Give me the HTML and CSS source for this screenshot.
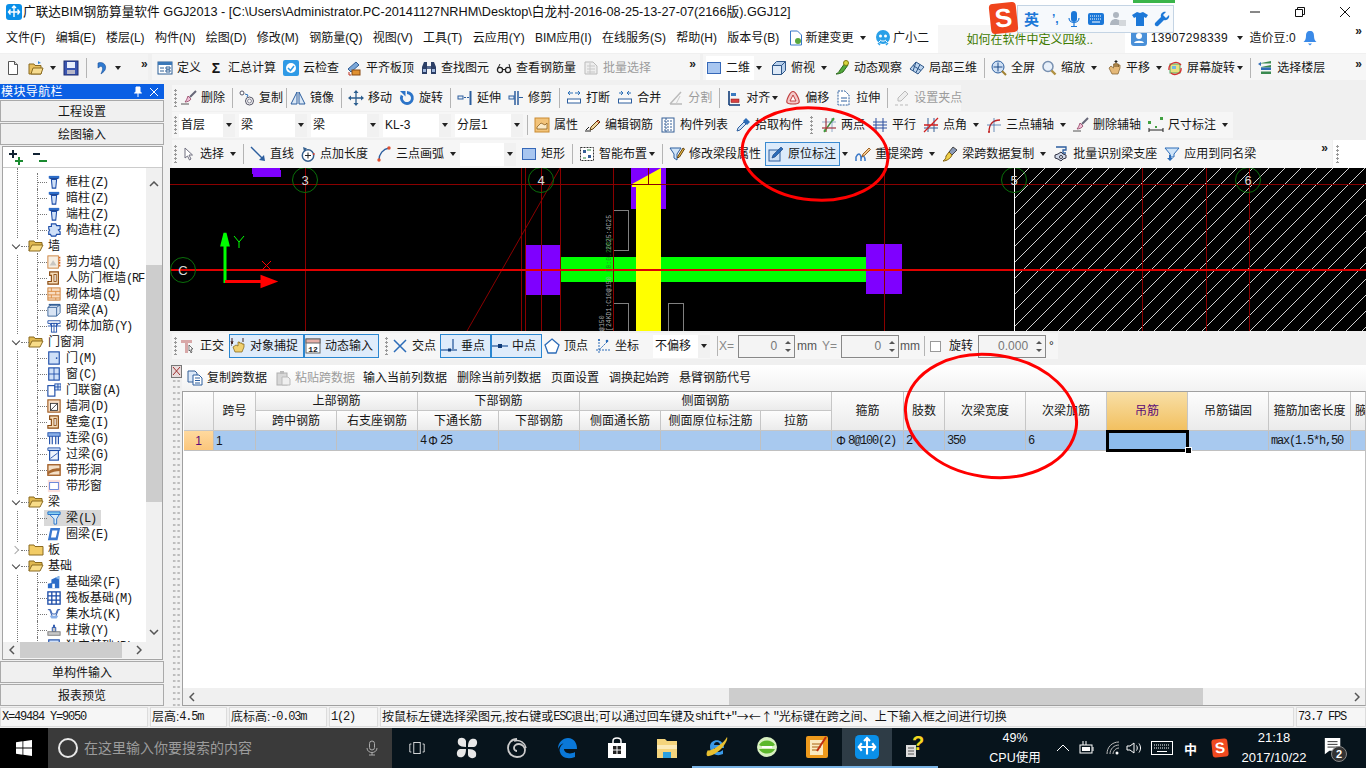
FILE: index.html
```html
<!DOCTYPE html>
<html lang="zh-CN">
<head>
<meta charset="utf-8">
<title>广联达BIM钢筋算量软件 GGJ2013</title>
<link rel="stylesheet" href="styles.css">
</head>
<body>
<svg class="defs" aria-hidden="true">
<symbol id="logo" viewBox="0 0 16 16"><rect x="0" y="0" width="16" height="16" rx="3" fill="#0a8fe8"/><path d="M8 3v10M2.500 8h11M4.500 5.500L2.500 8l2 2.500M11.500 5.500l2 2.500-2 2.500M6 4l2-2 2 2" stroke="#fff" stroke-width="1.400" fill="none"/></symbol>
<symbol id="new" viewBox="0 0 16 16"><path d="M3.500 1.500h6l3 3v10h-9z" fill="#fff" stroke="#555"/><path d="M9.500 1.500v3h3" fill="#ddd" stroke="#555"/></symbol>
<symbol id="open" viewBox="0 0 16 16"><path d="M1 14V4h5l1 1.500h6V14z" fill="#e8c060" stroke="#8a6a20"/><path d="M3 14l2-6h10l-2 6z" fill="#f6dc90" stroke="#8a6a20"/><path d="M10 1l3 2-3 1" fill="#3a8ad8"/></symbol>
<symbol id="save" viewBox="0 0 16 16"><rect x="1" y="1" width="14" height="14" fill="#3a55b0" stroke="#1c2c70"/><rect x="4" y="2" width="8" height="6" fill="#e8eefc"/><rect x="4" y="10" width="8" height="4" fill="#b8b8c8"/></symbol>
<symbol id="undo" viewBox="0 0 16 16"><path d="M5 3c6-2 9 3 7 7-1 2-3 3-4 4 1-3 3-6 0-8L5 8z" fill="#2f7ad0" stroke="#1a4f98" stroke-width=".6"/></symbol>
<symbol id="def" viewBox="0 0 16 16"><rect x="1" y="2" width="14" height="12" fill="#fff" stroke="#2d5f96"/><rect x="1" y="2" width="14" height="3" fill="#3b78b8"/><path d="M3 8h4M3 11h4M9 7h4v2h-4zM9 10h4v2h-4z" stroke="#2d5f96" fill="none"/></symbol>
<symbol id="cloud" viewBox="0 0 16 16"><rect x="0" y="0" width="16" height="16" rx="2" fill="#2f9ae6"/><circle cx="8" cy="8" r="5" fill="#fff"/><path d="M5 8l2.500 2.500L11 6" stroke="#2f9ae6" stroke-width="1.500" fill="none"/></symbol>
<symbol id="level" viewBox="0 0 16 16"><path d="M2 9l8-7 3 3-8 7z" fill="#7ba7d8" stroke="#345f96"/><rect x="6" y="10" width="8" height="5" fill="#e09030" stroke="#8a4a10"/><path d="M3 12v3h2" stroke="#c03020" fill="none"/></symbol>
<symbol id="find" viewBox="0 0 16 16"><path d="M1 14V7l2-5h3v12zM15 14V7l-2-5h-3v12z" fill="#2c3f66"/><rect x="6" y="6" width="4" height="3" fill="#586a8e"/><rect x="2" y="9" width="3" height="3" fill="#9fb6dc"/><rect x="11" y="9" width="3" height="3" fill="#9fb6dc"/></symbol>
<symbol id="view" viewBox="0 0 16 16"><circle cx="4" cy="10" r="2.600" fill="none" stroke="#222" stroke-width="1.300"/><circle cx="12" cy="10" r="2.600" fill="none" stroke="#222" stroke-width="1.300"/><path d="M6.500 9.500h3M2 8l2-4M14 8l-1-4" stroke="#222" fill="none"/></symbol>
<symbol id="batch" viewBox="0 0 16 16"><path d="M2 2h8l4 4v8H2z" fill="#eee" stroke="#bbb"/><path d="M4 6h8M4 9h8M4 12h8M7 3v11" stroke="#c8c8c8"/></symbol>
<symbol id="list2" viewBox="0 0 16 16"><path d="M1 1h7l2 2v9H1z" fill="#dbe8f8" stroke="#345f96"/><path d="M6 5h6l3 3v7H6z" fill="#fff" stroke="#2c5e9e"/><path d="M8 8h5M8 10.500h5M8 13h5" stroke="#2c5e9e"/></symbol>
<symbol id="paste" viewBox="0 0 16 16"><rect x="2" y="3" width="10" height="12" fill="#d8d8d8" stroke="#b0b0b0"/><rect x="5" y="1" width="4" height="3" fill="#bbb"/><path d="M7 7h6l2 2v6H7z" fill="#efefef" stroke="#bbb"/></symbol>
<symbol id="sq" viewBox="0 0 16 16"><rect x="1.500" y="2.500" width="13" height="11" fill="#a8c6f0" stroke="#3668b8"/></symbol>
<symbol id="top" viewBox="0 0 16 16"><path d="M1.500 5.500l4-4h9v9l-4 4h-9z" fill="#b8d0ec" stroke="#2e5688"/><path d="M1.500 5.500h9v9M10.500 5.500l4-4" fill="none" stroke="#2e5688"/><rect x="2" y="6" width="8" height="8" fill="#dde9f7"/></symbol>
<symbol id="orbit" viewBox="0 0 16 16"><path d="M2 14c2-1 3-2 4-4l5-7 3 2-5 7c-2 1-4 2-7 2z" fill="#52a83c" stroke="#2d6a1e"/><circle cx="12" cy="3" r="2.500" fill="#d8d840" stroke="#807810"/></symbol>
<symbol id="part" viewBox="0 0 16 16"><path d="M1 9l6-7 8 5-6 7z" fill="#bcd4ee" stroke="#2e5688"/><path d="M4 5.500l8 5M7 2l-3 9M11 4.500l-4 8" stroke="#2e5688" fill="none"/></symbol>
<symbol id="full" viewBox="0 0 16 16"><circle cx="7" cy="7" r="6" fill="#cfe0f4" stroke="#2c5e9e"/><path d="M7 2.500v9M2.500 7h9" stroke="#1c4a88"/><path d="M11 11l4 4" stroke="#a08030" stroke-width="2"/></symbol>
<symbol id="mag" viewBox="0 0 16 16"><circle cx="7" cy="6.500" r="5" fill="#e8f0fa" stroke="#7890b0" stroke-width="1.500"/><path d="M10.500 10.500l4 4" stroke="#b09040" stroke-width="2.400"/></symbol>
<symbol id="hand" viewBox="0 0 16 16"><path d="M3 8l3 6h6l2-6V5h-1.500v2-3H11v3-4H9v4-3H7.500v4L5 6z" fill="#e4b878" stroke="#7c5a28" stroke-width=".7"/><path d="M10 0v3M8.500 1.500h3" stroke="#222"/></symbol>
<symbol id="rot" viewBox="0 0 16 16"><rect x="3" y="4" width="10" height="9" fill="#e8e080" stroke="#50a860"/><path d="M5 6h4v3H5z" fill="#70b8e0"/><path d="M2 10C1 3 10 0 14 5M14 8c1 6-7 8-10 5" fill="none" stroke="#d83030" stroke-width="1.300"/></symbol>
<symbol id="floor" viewBox="0 0 16 16"><path d="M4 3l10-2v2.500H4zM4 7l10-2v2.500H4zM4 11.500h10V14H4z" fill="#3a8a50"/><path d="M4 7.500h10V10H4z" fill="#2f6cb8"/><path d="M1 4l3-2v4z" fill="#2f6cb8"/></symbol>
<symbol id="del" viewBox="0 0 16 16"><path d="M15 1L9 7" stroke="#667" stroke-width="2"/><path d="M7 6l3 3c-1 2-4 3-6 3 1-1 2-3 3-6z" fill="#f0c0d8" stroke="#904060" stroke-width=".8"/><path d="M0 14h8" stroke="#555"/></symbol>
<symbol id="copy" viewBox="0 0 16 16"><circle cx="10.500" cy="11" r="4" fill="none" stroke="#556"/><circle cx="10.500" cy="11" r="2" fill="none" stroke="#889"/><circle cx="3" cy="3" r="2" fill="#fff" stroke="#556"/><path d="M6 4l3 1-1 2" stroke="#2c70b8" fill="none"/></symbol>
<symbol id="mirror" viewBox="0 0 16 16"><path d="M7 2L1 14h6zM9 2l6 12H9z" fill="#dbe8f6" stroke="#2c5e9e"/></symbol>
<symbol id="move" viewBox="0 0 16 16"><path d="M8 2v12M2 8h12" stroke="#2c5e8e" stroke-width="1.300"/><path d="M8 0l2.500 3h-5zM8 16l2.500-3h-5zM0 8l3-2.500v5zM16 8l-3-2.500v5z" fill="#2c5e8e"/></symbol>
<symbol id="rotate" viewBox="0 0 16 16"><path d="M8 2.500a5.500 5.500 0 1 1-5 3" fill="none" stroke="#2c74c8" stroke-width="2.800"/><path d="M1 1h5.500v5.500z" fill="#2c74c8"/></symbol>
<symbol id="extend" viewBox="0 0 16 16"><path d="M13.500 1v14" stroke="#2c5e9e" stroke-width="2"/><rect x="1" y="6" width="5" height="3" fill="#e8eff8" stroke="#2c5e9e"/><path d="M7 7.500h5" stroke="#2c5e9e" stroke-dasharray="2 1"/></symbol>
<symbol id="trim" viewBox="0 0 16 16"><path d="M7 1v14M10 1v14" stroke="#2c5e9e" stroke-width="1.500"/><rect x="1" y="6" width="5" height="3" fill="#e8eff8" stroke="#2c5e9e"/><path d="M11 7.500h4" stroke="#2c5e9e"/></symbol>
<symbol id="brk" viewBox="0 0 16 16"><path d="M2 3h5M9 3h5M4 1L2 3l2 2M12 1l2 2-2 2" stroke="#2c70b8" fill="none"/><rect x="1.500" y="9" width="13" height="4" fill="#fff" stroke="#2c5e9e"/></symbol>
<symbol id="mrg" viewBox="0 0 16 16"><path d="M2 3h4M10 3h4M4 1l2 2-2 2M12 1l-2 2 2 2" stroke="#2c70b8" fill="none"/><rect x="1.500" y="9" width="13" height="4" fill="#fff" stroke="#2c5e9e"/></symbol>
<symbol id="spl" viewBox="0 0 16 16"><path d="M2 14L13 2M2 14h12" stroke="#bbb" stroke-width="1.500" fill="none"/><path d="M8 14l4-8" stroke="#ccc"/></symbol>
<symbol id="align" viewBox="0 0 16 16"><path d="M3 1v14M3 15h11" stroke="#123c78" stroke-width="1.600" fill="none"/><rect x="5" y="3" width="5" height="3" fill="#3a7ac0"/><rect x="5" y="9" width="8" height="3.500" fill="#d84040" stroke="#801010" stroke-width=".5"/></symbol>
<symbol id="offs" viewBox="0 0 16 16"><path d="M8 1.500c3 0 7 9 6 11-1 2-11 2-12 0C1 10.500 5 1.500 8 1.500z" fill="#f4c8c8" stroke="#c04040" stroke-width="1.200"/><path d="M8 5l3 6H5z" fill="#fff" stroke="#c04040"/></symbol>
<symbol id="strch" viewBox="0 0 16 16"><path d="M2 1h7l4 4v10H2z" fill="#fff" stroke="#2c5e9e" stroke-dasharray="2 1"/><path d="M5 8h6M5 11h6" stroke="#2c5e9e"/></symbol>
<symbol id="grey" viewBox="0 0 16 16"><path d="M11 1l3 3-7 7H4V8z" fill="#eee" stroke="#bbb"/><path d="M1 15h3M6 15h3M11 15h3" stroke="#bbb"/></symbol>
<symbol id="prop" viewBox="0 0 16 16"><rect x="1" y="1" width="14" height="14" fill="#f2c37a" stroke="#c98a30"/><path d="M3 10l4-4 4 2 2-2v6H3z" fill="#fbeac8" stroke="#805010" stroke-width=".7"/></symbol>
<symbol id="pen" viewBox="0 0 16 16"><path d="M6 10l7-7 2 2-7 7-3 1z" fill="#f0d8a0" stroke="#604010"/><path d="M12 4l2 2" stroke="#d03030"/><path d="M0 14h6M1 13l3-3" stroke="#222" fill="none"/></symbol>
<symbol id="list" viewBox="0 0 16 16"><rect x="2" y="1" width="12" height="14" fill="#fff" stroke="#345f96"/><path d="M4 4h8M4 7h8M4 10h8M4 13h8M6 1v14" stroke="#345f96" stroke-dasharray="2 1"/></symbol>
<symbol id="pick" viewBox="0 0 16 16"><path d="M2 14l1-3 6-6 2 2-6 6z" fill="#cfe0f4" stroke="#2c5e9e"/><path d="M8 4l3-3 4 4-3 3z" fill="#2c6cb8"/></symbol>
<symbol id="two" viewBox="0 0 16 16"><path d="M5 1v14M11 1v14M1 5h14M1 11h14" stroke="#2c5e9e" stroke-width=".5"/><path d="M3 15L13 1" stroke="#3a8a3a" stroke-width="1.300"/><path d="M5 1v14M1 11h14" stroke="#c03030"/><circle cx="4" cy="13.500" r="1.300" fill="#40a040"/><circle cx="12" cy="2.500" r="1.300" fill="#40a040"/></symbol>
<symbol id="par" viewBox="0 0 16 16"><path d="M4 1v14M11 1v14M1 5h14M1 8h14M1 11h14" stroke="#2c4e9e"/></symbol>
<symbol id="ang" viewBox="0 0 16 16"><path d="M5 1v14M11 1v14M1 11h14" stroke="#345f96"/><path d="M1 15L15 1M1 8h14" stroke="#d02020" stroke-width="1.300"/></symbol>
<symbol id="arcx" viewBox="0 0 16 16"><path d="M3 15C3 7 7 3 14 3" stroke="#c02020" stroke-width="1.300" fill="none"/><path d="M1 8h14M8 1v14" stroke="#2c5e9e" stroke-width=".7"/><circle cx="3" cy="15" r="1" fill="#c02020"/></symbol>
<symbol id="dim" viewBox="0 0 16 16"><path d="M1 11v4M15 11v4M1 13h14" stroke="#222" fill="none"/><rect x="0" y="4" width="3" height="3" fill="#40a040"/><rect x="12" y="0" width="3" height="3" fill="#40a040"/><rect x="7" y="9" width="2" height="2" fill="#40a040"/></symbol>
<symbol id="sel" viewBox="0 0 16 16"><path d="M5 2v10l2.500-2 2 4 1.500-1-2-4h3.500z" fill="#fff" stroke="#707080"/></symbol>
<symbol id="line" viewBox="0 0 16 16"><path d="M1 1l12 12" stroke="#2c5e9e" stroke-width="1.400"/><path d="M15 15l-6-1 5-5z" fill="#2c5e9e"/></symbol>
<symbol id="addl" viewBox="0 0 16 16"><circle cx="8" cy="9.500" r="5.700" fill="#fff" stroke="#345f8e" stroke-width="1.500"/><path d="M8 6.500v6M5 9.500h6" stroke="#222"/><path d="M3 1l4 1.500-3 3z" fill="#345f8e"/><circle cx="13.800" cy="8" r="1" fill="#d04030"/></symbol>
<symbol id="arc3" viewBox="0 0 16 16"><path d="M3 14C3 8 7 3 13 2" stroke="#2c5e9e" stroke-width="1.400" fill="none"/><circle cx="3" cy="14" r="1.700" fill="#e05030"/><circle cx="13" cy="2" r="1.700" fill="#e05030"/></symbol>
<symbol id="smart" viewBox="0 0 16 16"><rect x="1.500" y="1.500" width="13" height="13" fill="#fff" stroke="#333" stroke-dasharray="2 1"/><path d="M4 4h3v3H4zM9 9h3v3H9z" fill="#345f96"/><path d="M8 4h4M4 12h3" stroke="#2a8a40"/></symbol>
<symbol id="funnel" viewBox="0 0 16 16"><path d="M1 2h11L8 8v6l-3-2V8z" fill="#d0e4f8" stroke="#2c5e9e"/><path d="M9 10l5-8 1.500 1-5 8-2 1z" fill="#f0c040" stroke="#604010"/></symbol>
<symbol id="orig" viewBox="0 0 16 16"><rect x="1" y="4" width="11" height="11" fill="#cfe0f4" stroke="#2c5e9e"/><path d="M4 12l1-3 8-8 2 2-8 8z" fill="#2c6cb8" stroke="#143c78" stroke-width=".6"/></symbol>
<symbol id="reset" viewBox="0 0 16 16"><path d="M1 15v-4c2-4 4-4 5 0v4M6 13c1-4 3-4 4 0v2" fill="none" stroke="#3a78c8" stroke-width="1.500"/><path d="M8 8l6-6 1.500 1.500-6 6-2.500 1z" fill="#f0c890" stroke="#a06020"/></symbol>
<symbol id="broom" viewBox="0 0 16 16"><path d="M11 1l4 3-5 5-3-3z" fill="#8a9ab8" stroke="#444"/><path d="M7 6l3 3c-1 3-5 6-9 6 2-1 3-3 3-5z" fill="#f0d048" stroke="#806010"/></symbol>
<symbol id="bat2" viewBox="0 0 16 16"><path d="M3 1h10v3h-3v3h3" fill="none" stroke="#2c5e9e" stroke-width="1.300"/><path d="M8 6l2 2 3 1v3l-3 1-2 2-3-2-3-1V9l3-1z" fill="#cfd8e8" stroke="#334"/><circle cx="8" cy="11" r="1.500" fill="#fff" stroke="#334"/></symbol>
<symbol id="apply" viewBox="0 0 16 16"><path d="M1 2h14L10 8v3H6V8z" fill="#cfe4f8" stroke="#2c6cb8"/><path d="M6 15l-3-3h2V9h2v3h2z" fill="#2c6cb8"/></symbol>
<symbol id="orth" viewBox="0 0 16 16"><path d="M1 2h11v3H8v10H5V5H1z" fill="#d8a8a8"/><path d="M9 7l4 4h-2l1 3-1 1-1-3-1 1z" fill="#fff" stroke="#444" stroke-width=".7"/></symbol>
<symbol id="osnap" viewBox="0 0 16 16"><path d="M3 9l2 5h7l2-5V6h-2V5H9.500V4H8v4L6 7z" fill="#f0d070" stroke="#806010" stroke-width=".7"/><path d="M2 0v6M13 0v4M1 7h1M3 3l-1 3-1-3" stroke="#402020" fill="none"/></symbol>
<symbol id="dyn" viewBox="0 0 16 16"><rect x="1" y="1" width="14" height="14" fill="#fff" stroke="#666"/><rect x="1" y="1" width="14" height="4" fill="#e8b0a8" stroke="#666"/><text x="8" y="13.500" text-anchor="middle" font-size="8" font-weight="bold" font-family="Liberation Mono" fill="#222">12</text></symbol>
<symbol id="xp" viewBox="0 0 16 16"><path d="M2 2l12 12M14 2L2 14" stroke="#2c6cb8" stroke-width="1.500"/></symbol>
<symbol id="perp" viewBox="0 0 16 16"><path d="M12 1v10" stroke="#2c5e9e" stroke-width="1.300"/><path d="M0 12h16" stroke="#2c5e9e" stroke-width="1.300"/><rect x="7" y="10.500" width="3" height="3" fill="#123c78"/></symbol>
<symbol id="midp" viewBox="0 0 16 16"><path d="M0 8h16" stroke="#2c5e9e" stroke-width="1.300"/><rect x="6" y="6" width="4" height="4" fill="#123c78"/></symbol>
<symbol id="vtx" viewBox="0 0 16 16"><path d="M8 1l7 6-3 8H4L1 7z" fill="#fff" stroke="#2c6cb8" stroke-width="1.300"/></symbol>
<symbol id="crd" viewBox="0 0 16 16"><path d="M4 1v14M1 12h14M12 4L4 12" stroke="#2c6cb8" stroke-dasharray="2 1"/><circle cx="12" cy="3" r="1.300" fill="#2c6cb8"/><circle cx="4" cy="2" r="1" fill="#2c6cb8"/></symbol>
<symbol id="doc" viewBox="0 0 16 16"><path d="M2.500 1h7l4 4v10h-11z" fill="#fff" stroke="#3a78c8"/><circle cx="10" cy="11" r="3" fill="#5aa83c"/></symbol>
<symbol id="gxe" viewBox="0 0 16 16"><circle cx="8" cy="7" r="7" fill="#2aa0e8"/><circle cx="5.500" cy="6" r="1.500" fill="#fff"/><circle cx="10.500" cy="6" r="1.500" fill="#fff"/><path d="M5 10c2 1.500 4 1.500 6 0M3 13l2-2M13 13l-2-2" stroke="#fff" fill="none"/><path d="M3 13l2 2M13 13l-2 2" stroke="#2aa0e8" stroke-width="1.500"/></symbol>
<symbol id="user" viewBox="0 0 16 16"><rect x="0" y="0" width="16" height="16" rx="3" fill="#4a90d8"/><circle cx="8" cy="6" r="3" fill="#fff"/><path d="M3 13c1-3 9-3 10 0z" fill="#fff"/></symbol>
<symbol id="bell" viewBox="0 0 16 16"><path d="M8 1c3 0 4 2 4 5 0 3 1 5 2.500 6h-13C3 11 4 9 4 6c0-3 1-5 4-5z" fill="#3a8ae8"/><path d="M6 13.500h4l-2 2z" fill="#3a8ae8"/></symbol>
<symbol id="tT" viewBox="0 0 16 16"><path d="M2 1h12v3H2z" fill="#2c6cc8"/><path d="M5 5h6l-1 10H6z" fill="#cfe0f8" stroke="#1c4ca8" stroke-width="1.200"/><path d="M3 4h10" stroke="#123c88"/></symbol>
<symbol id="tPz" viewBox="0 0 16 16"><path d="M5 1h5l1 2h4v4l-2 1 2 2v3h-4l-1 2H5l-1-2H2v-3l1-2-1-1V4h3z" fill="#cfe0f8" stroke="#1c4ca8" stroke-width="1.300"/></symbol>
<symbol id="tSh" viewBox="0 0 16 16"><rect x="1" y="1" width="12" height="14" fill="#f6eee2" stroke="#c87a30"/><path d="M14.500 2v12" stroke="#d86020" stroke-dasharray="2 1" stroke-width="1.500"/><path d="M3 12l4-6 4 6z" fill="#aaa" opacity=".6"/></symbol>
<symbol id="tFr" viewBox="0 0 16 16"><path d="M3 1h10v14H1v-3h4V5H3z" fill="#f6dcb8" stroke="#8a4a10" stroke-width="1.300"/><rect x="8" y="4" width="2.500" height="8" fill="#fff" stroke="#8a4a10"/></symbol>
<symbol id="tBr" viewBox="0 0 16 16"><rect x="1" y="1" width="14" height="14" fill="#f8dcc0" stroke="#c87a30"/><path d="M1 5h14M1 9h14M1 12.500h14M5 1v4M10 5v4M5 9v3.500M10 12.500V15" stroke="#d88a40"/></symbol>
<symbol id="tBm" viewBox="0 0 16 16"><path d="M1 5l4-3h10v9l-4 4H1z" fill="#d8e4f4" stroke="#345f96"/><path d="M1 5h10v10M11 5l4-3" fill="none" stroke="#345f96"/><path d="M2 2h13" stroke="#345f96" stroke-width="2"/></symbol>
<symbol id="tRb" viewBox="0 0 16 16"><path d="M1 2h14v3H1z" fill="#fff" stroke="#1c4ca8"/><rect x="5" y="5" width="6" height="10" fill="#fff" stroke="#1c4ca8"/><path d="M1 8h15M8 5v10M3 5l3 4M13 5l-3 4" stroke="#1c4ca8"/></symbol>
<symbol id="tDr" viewBox="0 0 16 16"><rect x="2" y="1" width="12" height="14" fill="#cfe0f8" stroke="#1c4ca8" stroke-width="1.300"/><circle cx="11" cy="8" r="1" fill="#1c4ca8"/></symbol>
<symbol id="tWn" viewBox="0 0 16 16"><rect x="2" y="1" width="12" height="14" fill="#cfe0f8" stroke="#1c4ca8" stroke-width="1.300"/><path d="M8 1v14M2 8h12" stroke="#1c4ca8"/></symbol>
<symbol id="tDw" viewBox="0 0 16 16"><rect x="1" y="3" width="8" height="12" fill="#fff" stroke="#1c4ca8" stroke-width="1.300"/><rect x="9" y="1" width="7" height="7" fill="#cfe0f8" stroke="#1c4ca8"/><path d="M12.500 1v7M9 4.500h7" stroke="#1c4ca8"/></symbol>
<symbol id="tHl" viewBox="0 0 16 16"><rect x="1" y="1" width="14" height="14" fill="#f8e0c8" stroke="#a05a20" stroke-width="1.300"/><rect x="4" y="5" width="8" height="8" fill="#fff" stroke="#333"/><path d="M4 13l8-8" stroke="#333"/></symbol>
<symbol id="tLl" viewBox="0 0 16 16"><rect x="1" y="2" width="14" height="4" fill="#8ab0e8" stroke="#1c4ca8"/><path d="M3 6v9M6 6v9M10 6v9M13 6v9" stroke="#1c4ca8" stroke-width="1.300"/></symbol>
<symbol id="tGl" viewBox="0 0 16 16"><path d="M1 1h14v3H1z" fill="#cfe0f8" stroke="#1c4ca8"/><rect x="3" y="4" width="10" height="11" fill="#eef4fc" stroke="#1c4ca8" stroke-width="1.300"/><path d="M4 13l8-6" stroke="#1c4ca8"/></symbol>
<symbol id="tSo" viewBox="0 0 16 16"><rect x="1" y="2" width="14" height="12" fill="#f4e0c8" stroke="#a05a20" stroke-width="1.500"/><path d="M1 10c5-4 9-4 14-4v3c-5 0-9 1-14 4z" fill="#a86830"/></symbol>
<symbol id="tSw" viewBox="0 0 16 16"><rect x="1" y="1" width="14" height="14" fill="#fbe0dc"/><rect x="3" y="4" width="10" height="8" fill="#fff" stroke="#5a7ad8"/></symbol>
<symbol id="tBeam" viewBox="0 0 16 16"><path d="M1 1h14v3H1z" fill="#8ad0f0" stroke="#1c6cc8"/><path d="M3 4l5 5v6h3V9l3-5z" fill="#d8ecfa" stroke="#1c6cc8"/></symbol>
<symbol id="tRing" viewBox="0 0 16 16"><path d="M4 1h11l-3 14H1z" fill="#3a78d0"/><path d="M6 4h6l-2 8H4.500z" fill="#fff"/></symbol>
<symbol id="tFb" viewBox="0 0 16 16"><path d="M1 15v-5l4-1V5l9-4v14z" fill="#2c6cc8"/><path d="M6 15v-5h3v5z" fill="#fff"/><path d="M9 3l5-2v4" fill="#8ab8e8"/></symbol>
<symbol id="tRaft" viewBox="0 0 16 16"><rect x="1" y="1" width="14" height="14" fill="#fff" stroke="#1c4ca8" stroke-width="1.500"/><path d="M5.500 1v14M10.500 1v14M1 5.500h14M1 10.500h14" stroke="#1c4ca8" stroke-width="1.500"/></symbol>
<symbol id="tPit" viewBox="0 0 16 16"><path d="M1 3h3l2 5h4l2-5h3M3 3l3 8h4l3-8" fill="none" stroke="#1c4ca8"/><path d="M5 13h6l2-3H3z" fill="#8ab0e8"/></symbol>
<symbol id="tPier" viewBox="0 0 16 16"><path d="M6 5h4v5H6z" fill="#c8c8c8" stroke="#1c4ca8"/><path d="M7 2h2v3H7z" fill="#1c4ca8"/><rect x="1" y="10" width="14" height="4" fill="#c8c8c8" stroke="#777"/></symbol>
<symbol id="fo" viewBox="0 0 16 16"><path d="M1 13V3h5l1 1.500h7V7" fill="#e0b850" stroke="#8a6a20"/><path d="M1 13l3-6h11l-3 6z" fill="#f8dc88" stroke="#8a6a20"/></symbol>
<symbol id="fc" viewBox="0 0 16 16"><path d="M1 13V3h5l1 1.500h8V13z" fill="#f2cc66" stroke="#8a6a20"/></symbol>
</svg>

<div class="app">
  <header class="titlebar">
    <svg class="ic logo"><use href="#logo"/></svg>
    <span class="titletext">广联达BIM钢筋算量软件 GGJ2013 - [C:\Users\Administrator.PC-20141127NRHM\Desktop\白龙村-2016-08-25-13-27-07(2166版).GGJ12]</span>
    <div class="winctl">
      <svg class="wc" viewBox="0 0 12 12"><path d="M1 6h10" stroke="#111"/></svg>
      <svg class="wc" viewBox="0 0 12 12"><path d="M1.500 3.500h7v7h-7zM3.500 3.500v-2h7v7h-2" fill="none" stroke="#111"/></svg>
      <svg class="wc" viewBox="0 0 12 12"><path d="M1 1l10 10M11 1L1 11" stroke="#111"/></svg>
    </div>
  </header>

  <nav class="menubar">
    <span class="mi">文件(F)</span><span class="mi">编辑(E)</span><span class="mi">楼层(L)</span><span class="mi">构件(N)</span><span class="mi">绘图(D)</span><span class="mi">修改(M)</span><span class="mi">钢筋量(Q)</span><span class="mi">视图(V)</span><span class="mi">工具(T)</span><span class="mi">云应用(Y)</span><span class="mi">BIM应用(I)</span><span class="mi">在线服务(S)</span><span class="mi">帮助(H)</span><span class="mi">版本号(B)</span>
    <span class="b docb"><svg class="ic"><use href="#doc"/></svg>新建变更</span><i class="dd ddm"></i>
    <span class="b gxe"><svg class="ic"><use href="#gxe"/></svg>广小二</span>
    <span class="hint">如何在软件中定义四级..</span>
    <span class="b acct"><svg class="ic"><use href="#user"/></svg>13907298339</span><i class="dd"></i>
    <span class="mi bean">造价豆:0</span>
    <svg class="ic bell"><use href="#bell"/></svg>
    <span class="more mright">»</span>
  </nav>

  <div class="tbtop">
    <div class="bar ga">
      <svg class="ic"><use href="#new"/></svg>
      <svg class="ic"><use href="#open"/></svg><i class="dd"></i>
      <svg class="ic"><use href="#save"/></svg>
      <i class="sep"></i>
      <svg class="ic"><use href="#undo"/></svg><i class="dd"></i>
      <span class="more moreA">»</span>
    </div>
    <div class="bar gb">
      <span class="b"><svg class="ic"><use href="#def"/></svg>定义</span>
      <span class="b"><b class="sigma">Σ</b>汇总计算</span>
      <span class="b"><svg class="ic"><use href="#cloud"/></svg>云检查</span>
      <span class="b"><svg class="ic"><use href="#level"/></svg>平齐板顶</span>
      <span class="b"><svg class="ic"><use href="#find"/></svg>查找图元</span>
      <span class="b"><svg class="ic"><use href="#view"/></svg>查看钢筋量</span>
      <span class="b off"><svg class="ic"><use href="#batch"/></svg>批量选择</span>
      <span class="more mright">»</span>
    </div>
    <div class="bar gc">
      <span class="b white"><svg class="ic"><use href="#sq"/></svg>二维</span><i class="dd"></i>
      <span class="b l2"><svg class="ic"><use href="#top"/></svg>俯视</span><i class="dd"></i>
      <span class="b"><svg class="ic"><use href="#orbit"/></svg>动态观察</span>
      <span class="b"><svg class="ic"><use href="#part"/></svg>局部三维</span>
      <i class="sep"></i>
      <span class="b"><svg class="ic"><use href="#full"/></svg>全屏</span>
      <span class="b l-1"><svg class="ic"><use href="#mag"/></svg>缩放</span><i class="dd"></i>
      <span class="b l2"><svg class="ic"><use href="#hand"/></svg>平移</span><i class="dd"></i>
      <span class="b l-2"><svg class="ic"><use href="#rot"/></svg>屏幕旋转</span><i class="dd tight"></i>
      <i class="sep"></i>
      <span class="b"><svg class="ic"><use href="#floor"/></svg>选择楼层</span>
      <span class="more mright">»</span>
    </div>
  </div>

  <div class="main">
    <aside class="nav">
      <div class="navtitle"><span>模块导航栏</span>
        <svg class="navic" viewBox="0 0 12 12"><path d="M4 1h4v5l1.500 1h-7L4 6zM6 7v4" fill="#fff" stroke="#fff"/></svg>
        <svg class="navic" viewBox="0 0 12 12"><path d="M2 2l8 8M10 2l-8 8" stroke="#fff"/></svg>
      </div>
      <button class="navbtn">工程设置</button>
      <button class="navbtn">绘图输入</button>
      <div class="navbox">
        <div class="pm">
          <svg class="pmi" viewBox="0 0 16 16"><path d="M1 4h8M5 0v8" stroke="#123" stroke-width="2"/><path d="M7 11h8M11 7v8" stroke="#1a8a30" stroke-width="2"/></svg>
          <svg class="pmi" viewBox="0 0 16 16"><path d="M1 4h7" stroke="#123" stroke-width="2"/><path d="M7 11h8" stroke="#1a8a30" stroke-width="2"/></svg>
        </div>
        <div class="treewrap">
          <ul class="tree">
            <li class="leaf"><svg class="ic"><use href="#tT"/></svg><span>框柱<i class="m">(Z)</i></span></li>
            <li class="leaf"><svg class="ic"><use href="#tT"/></svg><span>暗柱<i class="m">(Z)</i></span></li>
            <li class="leaf"><svg class="ic"><use href="#tT"/></svg><span>端柱<i class="m">(Z)</i></span></li>
            <li class="leaf"><svg class="ic"><use href="#tPz"/></svg><span>构造柱<i class="m">(Z)</i></span></li>
            <li class="fold"><i class="chev"></i><svg class="ic"><use href="#fo"/></svg><span>墙</span></li>
            <li class="leaf"><svg class="ic"><use href="#tSh"/></svg><span>剪力墙<i class="m">(Q)</i></span></li>
            <li class="leaf"><svg class="ic"><use href="#tFr"/></svg><span>人防门框墙<i class="m">(RF</i></span></li>
            <li class="leaf"><svg class="ic"><use href="#tBr"/></svg><span>砌体墙<i class="m">(Q)</i></span></li>
            <li class="leaf"><svg class="ic"><use href="#tBm"/></svg><span>暗梁<i class="m">(A)</i></span></li>
            <li class="leaf"><svg class="ic"><use href="#tRb"/></svg><span>砌体加筋<i class="m">(Y)</i></span></li>
            <li class="fold"><i class="chev"></i><svg class="ic"><use href="#fo"/></svg><span>门窗洞</span></li>
            <li class="leaf"><svg class="ic"><use href="#tDr"/></svg><span>门<i class="m">(M)</i></span></li>
            <li class="leaf"><svg class="ic"><use href="#tWn"/></svg><span>窗<i class="m">(C)</i></span></li>
            <li class="leaf"><svg class="ic"><use href="#tDw"/></svg><span>门联窗<i class="m">(A)</i></span></li>
            <li class="leaf"><svg class="ic"><use href="#tHl"/></svg><span>墙洞<i class="m">(D)</i></span></li>
            <li class="leaf"><svg class="ic"><use href="#tFr"/></svg><span>壁龛<i class="m">(I)</i></span></li>
            <li class="leaf"><svg class="ic"><use href="#tLl"/></svg><span>连梁<i class="m">(G)</i></span></li>
            <li class="leaf"><svg class="ic"><use href="#tGl"/></svg><span>过梁<i class="m">(G)</i></span></li>
            <li class="leaf"><svg class="ic"><use href="#tSo"/></svg><span>带形洞</span></li>
            <li class="leaf"><svg class="ic"><use href="#tSw"/></svg><span>带形窗</span></li>
            <li class="fold"><i class="chev"></i><svg class="ic"><use href="#fo"/></svg><span>梁</span></li>
            <li class="leaf cur"><svg class="ic"><use href="#tBeam"/></svg><span>梁<i class="m">(L)</i></span></li>
            <li class="leaf"><svg class="ic"><use href="#tRing"/></svg><span>圈梁<i class="m">(E)</i></span></li>
            <li class="fold"><i class="chev shut"></i><svg class="ic"><use href="#fc"/></svg><span>板</span></li>
            <li class="fold"><i class="chev"></i><svg class="ic"><use href="#fo"/></svg><span>基础</span></li>
            <li class="leaf"><svg class="ic"><use href="#tFb"/></svg><span>基础梁<i class="m">(F)</i></span></li>
            <li class="leaf"><svg class="ic"><use href="#tRaft"/></svg><span>筏板基础<i class="m">(M)</i></span></li>
            <li class="leaf"><svg class="ic"><use href="#tPit"/></svg><span>集水坑<i class="m">(K)</i></span></li>
            <li class="leaf"><svg class="ic"><use href="#tPier"/></svg><span>柱墩<i class="m">(Y)</i></span></li>
            <li class="leaf"><svg class="ic"><use href="#tDr"/></svg><span>独立基础<i class="m">(P)</i></span></li>
          </ul>
          <div class="vs">
            <svg class="arr up" viewBox="0 0 10 6"><path d="M1 5l4-4 4 4" fill="none" stroke="#555" stroke-width="1.500"/></svg>
            <div class="vthumb"></div>
            <svg class="arr down" viewBox="0 0 10 6"><path d="M1 1l4 4 4-4" fill="none" stroke="#555" stroke-width="1.500"/></svg>
          </div>
        </div>
        <div class="hs navhs">
          <svg class="arrh" viewBox="0 0 6 10"><path d="M5 1L1 5l4 4" fill="none" stroke="#555" stroke-width="1.500"/></svg>
          <div class="hthumb"></div>
          <svg class="arrh right" viewBox="0 0 6 10"><path d="M1 1l4 4-4 4" fill="none" stroke="#555" stroke-width="1.500"/></svg>
        </div>
      </div>
      <button class="navbtn">单构件输入</button>
      <button class="navbtn">报表预览</button>
    </aside>

    <section class="work">
      <div class="row r27">
        <div class="bar w789">
          <i class="grip"></i>
          <span class="b"><svg class="ic"><use href="#del"/></svg>删除</span><i class="sep"></i>
          <span class="b"><svg class="ic"><use href="#copy"/></svg>复制</span><i class="sep z"></i>
          <span class="b"><svg class="ic"><use href="#mirror"/></svg>镜像</span><i class="sep"></i>
          <span class="b"><svg class="ic"><use href="#move"/></svg>移动</span>
          <span class="b"><svg class="ic"><use href="#rotate"/></svg>旋转</span><i class="sep"></i>
          <span class="b"><svg class="ic"><use href="#extend"/></svg>延伸</span>
          <span class="b"><svg class="ic"><use href="#trim"/></svg>修剪</span><i class="sep"></i>
          <span class="b"><svg class="ic"><use href="#brk"/></svg>打断</span>
          <span class="b"><svg class="ic"><use href="#mrg"/></svg>合并</span>
          <span class="b off"><svg class="ic"><use href="#spl"/></svg>分割</span><i class="sep"></i>
          <span class="b"><svg class="ic"><use href="#align"/></svg>对齐</span><i class="dd tight"></i>
          <span class="b"><svg class="ic"><use href="#offs"/></svg>偏移</span>
          <span class="b"><svg class="ic"><use href="#strch"/></svg>拉伸</span><i class="sep"></i>
          <span class="b off"><svg class="ic"><use href="#grey"/></svg>设置夹点</span>
        </div>
      </div>
      <div class="row r27">
        <div class="bar w634">
          <i class="grip"></i>
          <div class="combos">
            <div class="combo first"><span>首层</span><i class="dd"></i></div>
            <div class="combo"><span>梁</span><i class="dd"></i></div>
            <div class="combo"><span>梁</span><i class="dd"></i></div>
            <div class="combo"><span>KL-3</span><i class="dd"></i></div>
            <div class="combo"><span>分层1</span><i class="dd"></i></div>
          </div>
          <i class="sep l-3"></i>
          <span class="b"><svg class="ic"><use href="#prop"/></svg>属性</span>
          <span class="b"><svg class="ic"><use href="#pen"/></svg>编辑钢筋</span>
          <span class="b"><svg class="ic"><use href="#list"/></svg>构件列表</span>
          <span class="b"><svg class="ic"><use href="#pick"/></svg>拾取构件</span>
        </div>
        <div class="bar w427">
          <i class="grip solo"></i>
          <span class="b"><svg class="ic"><use href="#two"/></svg>两点</span>
          <span class="b"><svg class="ic"><use href="#par"/></svg>平行</span>
          <span class="b"><svg class="ic"><use href="#ang"/></svg>点角</span><i class="dd"></i>
          <span class="b"><svg class="ic"><use href="#arcx"/></svg>三点辅轴</span><i class="dd"></i>
          <span class="b"><svg class="ic"><use href="#del"/></svg>删除辅轴</span>
          <span class="b"><svg class="ic"><use href="#dim"/></svg>尺寸标注</span><i class="dd"></i>
        </div>
      </div>
      <div class="row r30">
        <div class="bar w1160">
          <i class="grip"></i>
          <span class="b l-1"><svg class="ic"><use href="#sel"/></svg>选择</span><i class="dd"></i><i class="sep"></i>
          <span class="b"><svg class="ic"><use href="#line"/></svg>直线</span>
          <span class="b l-1"><svg class="ic"><use href="#addl"/></svg>点加长度</span>
          <span class="b l1"><svg class="ic"><use href="#arc3"/></svg>三点画弧</span><i class="dd"></i>
          <div class="combo blank l-3"><span></span><i class="dd"></i></div>
          <span class="b l-2"><svg class="ic"><use href="#sq"/></svg>矩形</span><i class="sep"></i>
          <span class="b"><svg class="ic"><use href="#smart"/></svg>智能布置</span><i class="dd tight"></i><i class="sep"></i>
          <span class="b"><svg class="ic"><use href="#funnel"/></svg>修改梁段属性</span>
          <span class="b on l-3"><svg class="ic"><use href="#orig"/></svg>原位标注</span><i class="dd tight"></i>
          <span class="b"><svg class="ic"><use href="#reset"/></svg>重提梁跨</span><i class="dd"></i>
          <span class="b"><svg class="ic"><use href="#broom"/></svg>梁跨数据复制</span><i class="dd"></i>
          <span class="b"><svg class="ic"><use href="#bat2"/></svg>批量识别梁支座</span>
          <span class="b"><svg class="ic"><use href="#apply"/></svg>应用到同名梁</span>
          <span class="more mright">»</span>
        </div>
        <div class="tailbox"><i class="grip solo"></i></div>
      </div>

      <svg class="cad" viewBox="170 168 1196 163" aria-label="CAD 绘图区">
        <defs><pattern id="hatch" x="1013" y="168" width="16" height="16" patternUnits="userSpaceOnUse"><path d="M0 16L16 0" stroke="#cfcfcf" stroke-width="1" shape-rendering="crispEdges"/></pattern></defs>
        <rect x="170" y="168" width="1196" height="163" fill="#000"/>
        <rect x="1014" y="168" width="352" height="163" fill="url(#hatch)"/>
        <path d="M252 168h28v2h1v7h-28v-3h-1z" fill="#7f00ff"/>
        <rect x="631" y="168" width="35" height="41" fill="#7f00ff"/>
        <rect x="525" y="245" width="35" height="50" fill="#7f00ff"/>
        <rect x="866" y="244" width="36" height="50" fill="#7f00ff"/>
        <rect x="561" y="257" width="305" height="25" fill="#00ff00"/>
        <path d="M636 331V187l-4 0v-3l29-16v163z" fill="#ffff00"/>
        <g fill="none" stroke="#808080"><rect x="613.500" y="210.500" width="15" height="40"/><rect x="613.500" y="303.500" width="15" height="30"/><rect x="668.500" y="303.500" width="15" height="30"/></g>
        <g stroke="#8a0000" fill="none" class="crisp">
          <path d="M170 184.500h1196M305.500 168v163M521.500 168v163M525.500 168v163M541.500 168v163M560.500 168v163M613.500 168v163M648.500 168v16M884.500 168v163M1142.500 168v163M1206.500 168v163M1249.500 168v163"/>
        </g>
        <path d="M560 168L467 331" stroke="#8a0000" fill="none"/>
        <path d="M170 270h1196" stroke="#e00000" stroke-width="2"/>
        <path d="M1014.500 168v163" stroke="#fff"/>
        <g fill="none" stroke="#0a6e0a"><circle cx="305" cy="180" r="12.500"/><circle cx="541" cy="180" r="12.500"/><circle cx="183" cy="270" r="12.500"/><circle cx="1014" cy="180" r="12.500"/><circle cx="1248" cy="180" r="12.500"/></g>
        <g class="axis"><text x="305" y="185">3</text><text x="541" y="185">4</text><text x="183" y="275">C</text><text x="1014" y="185">5</text><text x="1248" y="185">6</text></g>
        <path d="M225 283v-38M222 245h6l-3-12z" stroke="#00ff00" stroke-width="3" fill="#00ff00"/>
        <path d="M225 281.500h40M262 277l12 4.500-12 4.500z" stroke="#ff0000" stroke-width="3" fill="#ff0000"/>
        <path d="M234 236l5 6 5-6M239 242v6" stroke="#00ff00" fill="none"/>
        <path d="M262 261l9 9M271 261l-9 9" stroke="#ff0000" fill="none"/>
        <text class="rot" transform="translate(611 250) rotate(-90)">2C25:4C25</text>
        <text class="rot" transform="translate(611 331) rotate(-90)">[24KD1:C10@150 <tspan fill="#2a8a2a">[0:0.200]</tspan></text>
        <text class="rot" transform="translate(604 331) rotate(-90)">@150</text>
      </svg>

      <div class="snaprow">
        <div class="bar snap">
          <i class="grip free"></i>
          <span class="b l2"><svg class="ic"><use href="#orth"/></svg>正交</span>
          <span class="b tog l5 w75"><svg class="ic"><use href="#osnap"/></svg>对象捕捉</span>
          <span class="b tog w75"><svg class="ic"><use href="#dyn"/></svg>动态输入</span>
          <i class="grip free l6"></i>
          <span class="b l3"><svg class="ic"><use href="#xp"/></svg>交点</span>
          <span class="b tog l4 w51"><svg class="ic"><use href="#perp"/></svg>垂点</span>
          <span class="b tog w51"><svg class="ic"><use href="#midp"/></svg>中点</span>
          <span class="b l2"><svg class="ic"><use href="#vtx"/></svg>顶点</span>
          <span class="b l7"><svg class="ic"><use href="#crd"/></svg>坐标</span>
          <div class="combo offset l14"><span>不偏移</span><i class="dd"></i></div>
          <i class="sep l7"></i>
          <span class="lab xl">X=</span>
          <div class="spin w57"><span>0</span><i class="sp"><i class="spu"></i><i class="spd"></i></i></div>
          <span class="lab ul">mm</span>
          <span class="lab yl">Y=</span>
          <div class="spin w58"><span>0</span><i class="sp"><i class="spu"></i><i class="spd"></i></i></div>
          <span class="lab ul2">mm</span>
          <i class="sep"></i>
          <i class="chk"></i>
          <span class="rotlab">旋转</span>
          <div class="spin w68"><span>0.000</span><i class="sp"><i class="spu"></i><i class="spd"></i></i></div>
          <span class="deg">°</span>
        </div>
      </div>

      <div class="lower">
        <div class="split">
          <svg class="xbox" viewBox="0 0 11 13"><rect x=".5" y=".5" width="10" height="12" fill="#e8dcdc" stroke="#777"/><path d="M2 2l7 8M9 2l-7 8" stroke="#a03030"/></svg>
          <div class="dots"></div>
        </div>
        <div class="panel">
          <div class="propbar">
            <span class="b"><svg class="ic"><use href="#list2"/></svg>复制跨数据</span>
            <span class="b off l-2"><svg class="ic"><use href="#paste"/></svg>粘贴跨数据</span>
            <span class="t l-2">输入当前列数据</span>
            <span class="t">删除当前列数据</span>
            <span class="t">页面设置</span>
            <span class="t">调换起始跨</span>
            <span class="t">悬臂钢筋代号</span>
          </div>
          <div class="gridwrap">
            <div class="sheet">
              <div class="table">
                <div class="h r2"></div>
                <div class="h r2">跨号</div>
                <div class="h c2">上部钢筋</div>
                <div class="h c2">下部钢筋</div>
                <div class="h c3">侧面钢筋</div>
                <div class="h r2">箍筋</div>
                <div class="h r2">肢数</div>
                <div class="h r2">次梁宽度</div>
                <div class="h r2">次梁加筋</div>
                <div class="h r2 act">吊筋</div>
                <div class="h r2">吊筋锚固</div>
                <div class="h r2">箍筋加密长度</div>
                <div class="h r2 cut">腋长</div>
                <div class="h">跨中钢筋</div>
                <div class="h">右支座钢筋</div>
                <div class="h">下通长筋</div>
                <div class="h">下部钢筋</div>
                <div class="h">侧面通长筋</div>
                <div class="h">侧面原位标注筋</div>
                <div class="h">拉筋</div>

                <div class="d rh">1</div>
                <div class="d">1</div>
                <div class="d"></div>
                <div class="d"></div>
                <div class="d"><span class="m">4</span><span class="rb">Φ</span><span class="m">25</span></div>
                <div class="d"></div>
                <div class="d"></div>
                <div class="d"></div>
                <div class="d"></div>
                <div class="d"><span class="rb">Φ</span><span class="m">8@100(2)</span></div>
                <div class="d"><span class="m">2</span></div>
                <div class="d"><span class="m">350</span></div>
                <div class="d"><span class="m">6</span></div>
                <div class="d cursor"><i class="handle"></i></div>
                <div class="d"></div>
                <div class="d"><span class="m">max(1.5*h,50</span></div>
                <div class="d"></div>
              </div>
            </div>
            <div class="hs gridhs">
              <svg class="arrh" viewBox="0 0 6 10"><path d="M5 1L1 5l4 4" fill="none" stroke="#555" stroke-width="1.500"/></svg>
              <div class="hthumb big"></div>
              <svg class="arrh right" viewBox="0 0 6 10"><path d="M1 1l4 4-4 4" fill="none" stroke="#555" stroke-width="1.500"/></svg>
            </div>
          </div>
        </div>
      </div>
    </section>
  </div>

  <footer class="status">
    <div class="cell w148"><span class="m">X=49484 Y=9050</span></div>
    <div class="cell w77">层高:<span class="m">4.5m</span></div>
    <div class="cell w98">底标高:<span class="m">-0.03m</span></div>
    <div class="cell w49"><span class="m">1(2)</span></div>
    <div class="cell w914">按鼠标左键选择梁图元,按右键或<span class="m">ESC</span>退出;可以通过回车键及<span class="m">shift+"</span><span class="aw">→←↑</span><span class="m">"</span>光标键在跨之间、上下输入框之间进行切换</div>
    <div class="cell w70"><span class="m">73.7 FPS</span></div>
  </footer>

  <div class="taskbar">
    <div class="start"><svg viewBox="0 0 16 16" class="tki"><path d="M0 2.200l6.500-.9v6.300H0zM7.300 1.200L16 0v7.600H7.300zM0 8.400h6.500v6.300L0 13.800zM7.300 8.400H16V16l-8.700-1.200z" fill="#fff"/></svg></div>
    <div class="search"><i class="cort"></i><span>在这里输入你要搜索的内容</span>
      <svg class="mic" viewBox="0 0 16 16"><rect x="5.500" y="1" width="5" height="9" rx="2.500" fill="none" stroke="#aaa"/><path d="M3 8c0 6 10 6 10 0M8 12.500V15M5 15h6" fill="none" stroke="#aaa"/></svg>
    </div>
    <div class="tk"><svg class="tki" viewBox="0 0 20 16"><rect x="6" y="1" width="8" height="14" fill="none" stroke="#fff"/><path d="M3 3H1v10h2M17 3h2v10h-2" fill="none" stroke="#fff"/></svg></div>
    <div class="tk"><svg class="tkb" viewBox="0 0 24 24"><path d="M11 11C4 11 2 8 3 4c1-3 7-3 8 1zM13 11c0-7 3-9 7-8 3 1 3 7-1 8zM13 13c7 0 9 3 8 7-1 3-7 3-8-1zM11 13c0 7-3 9-7 8-3-1-3-7 1-8z" fill="#e8e8e8"/></svg></div>
    <div class="tk"><svg class="tkb" viewBox="0 0 24 24"><path d="M12 3C6 3 3 8 3 12c0 6 5 9 9 9 5 0 8-3 8-7 0-3-3-6-6-6-3 0-5 2-5 4s2 3 3 3" fill="none" stroke="#ccc" stroke-width="1.800"/><path d="M9 5c6-2 11 2 12 7" fill="none" stroke="#ccc" stroke-width="1.500"/></svg></div>
    <div class="tk"><svg class="tkb" viewBox="0 0 24 24"><path d="M3 13C3 6 8 2 13 2c6 0 9 5 9 11H9c0 4 6 6 11 3v5c-8 3-14 0-15-5 0 0-1-2 0-4 1-3 4-5 4-5-3 1-5 3-6 6z" fill="#0a78d8"/></svg></div>
    <div class="tk"><svg class="tkb" viewBox="0 0 24 24"><path d="M3 7h18v15H3z" fill="#fff"/><path d="M8 7V5c0-4 8-4 8 0v2" fill="none" stroke="#fff" stroke-width="1.500"/><path d="M8 10h3.500v3.500H8zM12.500 10H16v3.500h-3.500zM8 14.500h3.500V18H8zM12.500 14.500H16V18h-3.500z" fill="#222"/></svg></div>
    <div class="tk"><svg class="tkb" viewBox="0 0 24 24"><path d="M2 3h8l2 2h10v17H2z" fill="#f4d47c"/><path d="M2 9h20v4H2z" fill="#fbeab8"/><path d="M8 16h8v6H8z" fill="#2aa0e0"/></svg></div>
    <div class="tk u"><svg class="tkb" viewBox="0 0 24 24"><path d="M5 12c0-9 14-9 14 1H9c0 5 6 5 9 2v4c-6 3-13 0-13-7zM9 10h6c0-4-6-4-6 0z" fill="#3a9ae8"/><path d="M22 2c2 3-7 17-18 19-3 1-3-3-1-6 0 3 16-6 19-13z" fill="#e8c030"/></svg></div>
    <div class="tk u"><svg class="tkb" viewBox="0 0 24 24"><circle cx="12" cy="12" r="10" fill="#d8f0c0"/><path d="M4 10c3-6 13-6 16 0l-2 1H6zM4 14c3 6 13 6 16 0z" fill="#5cb82c"/><path d="M7 12h10" stroke="#fff" stroke-width="2"/></svg></div>
    <div class="tk u"><svg class="tkb" viewBox="0 0 24 24"><rect x="1" y="1" width="22" height="22" rx="2" fill="#ee9a1c"/><rect x="5" y="5" width="13" height="15" fill="#fbeac0"/><path d="M7 9h9M7 12h9M7 15h6" stroke="#a86010"/><path d="M21 2L12 16" stroke="#c03010" stroke-width="2"/></svg></div>
    <div class="tk u active"><svg class="tkb" viewBox="0 0 16 16"><use href="#logo"/></svg></div>
    <div class="tk u last"><svg class="tkb" viewBox="0 0 24 24"><path d="M5 10h10v12H5z" fill="#ddd"/><path d="M7 13h6M7 16h6M7 19h6" stroke="#555"/></svg><b class="qm">?</b></div>
    <div class="cpu"><span>49%</span><span>CPU使用</span></div>
    <svg class="tray w16a" viewBox="0 0 16 16"><path d="M2 11l6-6 6 6" fill="none" stroke="#fff"/></svg>
    <svg class="tray w16b" viewBox="0 0 16 16"><rect x="1" y="5" width="12" height="8" fill="none" stroke="#fff"/><rect x="3" y="7" width="8" height="4" fill="#fff"/><path d="M14 7v4M4 1v4M7 1v4" stroke="#fff"/></svg>
    <svg class="tray w16c" viewBox="0 0 16 16"><path d="M2 14c0-7 5-12 12-12M5 14c0-5 4-9 9-9M8 14c0-3 3-6 6-6" fill="none" stroke="#bbb"/><circle cx="12" cy="13" r="1.500" fill="#fff"/></svg>
    <svg class="tray w16d" viewBox="0 0 16 16"><path d="M1 6h3l4-3v10l-4-3H1z" fill="none" stroke="#fff"/><path d="M10.500 5.500c1 1.500 1 3.500 0 5M13 3.500c2 3 2 6 0 9" fill="none" stroke="#fff"/></svg>
    <svg class="tray kb" viewBox="0 0 22 16"><rect x=".5" y="1.500" width="21" height="13" fill="none" stroke="#fff"/><path d="M3 5h16M3 8h16" stroke="#fff" stroke-dasharray="1 1"/><path d="M6 11.500h10" stroke="#fff"/></svg>
    <span class="zh">中</span>
    <span class="slogo">S</span>
    <div class="clock"><span>21:18</span><span>2017/10/22</span></div>
    <div class="notif"><svg viewBox="0 0 22 24" class="notifi"><path d="M2 1h17v14H7l-5 4z" fill="#fff"/><path d="M5 5h11M5 8h11M5 11h11" stroke="#222"/></svg><b class="nbadge">2</b></div>
  </div>

  <div class="ime">
    <span class="imes">S</span>
    <div class="imebar">
      <b class="imeying">英</b><span class="imedot">’,</span>
      <svg class="imei" viewBox="0 0 16 16"><rect x="5" y="0" width="6" height="11" rx="3" fill="#1c78d8"/><path d="M3 7c0 6 10 6 10 0M8 12v3M5 15.500h6" fill="none" stroke="#1c78d8" stroke-width="1.200"/></svg>
      <svg class="imei" viewBox="0 0 16 16"><rect x="0" y="2" width="16" height="12" rx="2" fill="#1c78d8"/><path d="M2 5h12M2 8h12" stroke="#fff" stroke-dasharray="1 1"/><path d="M4 11h8" stroke="#fff"/></svg>
      <svg class="imei" viewBox="0 0 16 16"><circle cx="6" cy="4" r="3" fill="#aeb6c0"/><path d="M0 14c0-8 11-8 11 0z" fill="#aeb6c0"/><rect x="9" y="9" width="7" height="6" fill="#d4d8dc"/></svg>
      <svg class="imei" viewBox="0 0 16 16"><path d="M5 1l3 1 3-1 5 3-2 3-2-1v9H4V6L2 7 0 4z" fill="#1c78d8"/></svg>
      <svg class="imei" viewBox="0 0 16 16"><path d="M15 4l-3 3-3-3 3-3c-3-1-6 2-5 5L1 12c-1 2 1 4 3 3l6-6c3 1 6-2 5-5z" fill="#1c78d8"/></svg>
    </div>
  </div>
  <i class="greentab"></i>

  <svg class="marks" viewBox="0 0 1366 768" aria-hidden="true">
    <ellipse cx="815" cy="154" rx="73" ry="46" transform="rotate(5 815 154)" fill="none" stroke="#ff0000" stroke-width="3"/>
    <ellipse cx="991" cy="416" rx="86" ry="61" transform="rotate(8 991 416)" fill="none" stroke="#ff0000" stroke-width="3"/>
  </svg>
</div>
</body>
</html>
```
FILE: styles.css
```css
* { box-sizing: border-box; }
html, body { margin: 0; padding: 0; }
body {
  width: 1366px; height: 768px; overflow: hidden;
  font: 12px/16px "Liberation Sans", "Noto Sans CJK SC", sans-serif;
  color: #161616; background: #f0f0f0;
}
.defs { position: absolute; width: 0; height: 0; }
.app { position: relative; width: 1366px; height: 768px; overflow: hidden; display: flex; flex-direction: column; }
i { font-style: normal; display: block; }
ul { list-style: none; margin: 0; padding: 0; }

/* shared */
.ic { width: 16px; height: 16px; flex: none; display: block; }
.b { display: flex; align-items: center; gap: 4px; white-space: nowrap; flex: none; }
.off { color: #9c9c9c; }
.dd { height: 0; flex: none; margin-left: -1px; border: 3px solid transparent; border-top: 4px solid #222; border-bottom: 0; width: 6px; }
.dd.tight { margin-left: -5px; }
.dd.ddm { margin-left: -4px; }
.sep { width: 1px; height: 20px; background: #b4b4b4; flex: none; margin-right: -1px; }
.sep.z { margin: 0 -4px; }
.grip { width: 3px; height: 18px; flex: none; margin-right: -3px; background: radial-gradient(circle at 1.500px 1.500px, #999 1px, transparent 1.300px) 0 0 / 3px 4px; }
.grip.solo, .grip.free { margin-right: 1px; }
.more { font-size: 12px; font-weight: bold; color: #222; line-height: 10px; align-self: flex-start; margin-top: 3px; }
.mright { margin-left: auto; padding-right: 4px; }
.moreA { margin-left: 13px; }
.bar { display: flex; align-items: center; gap: 7px; background: #f6f6f6; height: 100%; padding-left: 2px; flex: none; }
.l-3 { margin-left: -3px !important; }
.l-2 { margin-left: -2px; }
.l-1 { margin-left: -1px; }
.l1 { margin-left: 1px; }
.l2 { margin-left: 2px; }
.l3 { margin-left: 3px; }
.l4 { margin-left: 4px; }
.l5 { margin-left: 5px; }
.l6 { margin-left: 6px; }
.l7 { margin-left: 7px; }
.l14 { margin-left: 14px; }

/* title */
.titlebar { height: 23px; background: #fff; display: flex; align-items: center; padding-left: 6px; flex: none; }
.logo { margin-right: 1px; }
.titletext { white-space: nowrap; font-size: 12.700px; color: #111; }
.winctl { margin-left: auto; display: flex; }
.wc { width: 12px; height: 12px; margin-right: 33px; }
.wc:last-child { margin-right: 15px; }

/* menu */
.menubar { height: 30px; background: #fff; display: flex; align-items: center; gap: 10.300px; padding-left: 6px; flex: none; }
.mi { white-space: nowrap; flex: none; }
.docb { gap: 2px; margin-left: -2px; }
.gxe { margin-left: -1px; gap: 2px; }
.hint { align-self: flex-end; height: 28px; width: 187px; margin-left: -1px; padding: 7px 0 0 28px; background: #f6f6f6; color: #3f7a00; white-space: nowrap; flex: none; }
.acct { letter-spacing: .35px; margin-left: -5px; }
.bean { margin-left: -4px; }
.bell { margin-left: -4px; }

/* top toolbars */
.tbtop { height: 31px; display: flex; align-items: flex-start; padding-top: 1px; flex: none; }
.tbtop .bar { height: 26px; padding-top: 2px; }
.ga { width: 148px; padding-left: 5px; background: #f4f4f4; }
.gb { width: 548px; margin-left: 4px; padding-left: 5px; }
.gc { width: 663px; margin-left: 3px; padding-left: 3px; }
.sigma { width: 16px; text-align: center; font-size: 14px; }
.white { background: #fff; height: 24px; padding-right: 4px; margin-right: -4px; }

/* layout */
.main { height: 622px; display: flex; flex: none; }
.nav { width: 164px; flex: none; display: flex; flex-direction: column; gap: 1px; }
.navtitle { height: 15px; background: #0a5fe4; color: #fff; display: flex; align-items: center; padding-left: 1px; }
.navtitle span { margin-right: auto; letter-spacing: .4px; }
.navic { width: 12px; height: 12px; margin-right: 4px; }
.navbtn { height: 22px; background: #f0f0f0; border: 1px solid #aaa; border-radius: 0; padding: 1px 0 0; font: inherit; color: inherit; flex: none; }
.navbox { height: 514px; margin-left: 2px; width: 161px; background: #f4f4f4; border: 1px solid #a4a4a4; flex: none; }
.pm { height: 21px; background: #fff; display: flex; gap: 8px; padding: 3px 0 0 5px; border-bottom: 1px solid #ccc; }
.pmi { width: 16px; height: 16px; }
.treewrap { display: flex; height: 474px; }
.tree { width: 143px; height: 474px; background: #fff; overflow: hidden; padding-top: 6px; position: relative; }
.tree::before { content: ""; position: absolute; left: 14px; top: 0; bottom: 0; border-left: 1px dotted #777; }
.leaf, .fold { height: 16px; display: flex; align-items: center; position: relative; white-space: nowrap; }
.leaf { padding-left: 44px; }
.leaf .ic { width: 14px; height: 14px; margin: 0 5px 0 0; position: relative; z-index: 1; }
.leaf::before { content: ""; position: absolute; left: 34px; top: -1px; bottom: -1px; border-left: 1px dotted #777; }
.leaf::after { content: ""; position: absolute; left: 34px; top: 8px; width: 10px; border-top: 1px dotted #777; }
.cur { background: linear-gradient(#d9d9d9, #d9d9d9) 41px 0 / 57px 16px no-repeat; }
.fold { padding-left: 25px; background: linear-gradient(#fff, #fff) 8px 0 / 14px 16px no-repeat; }
.fold .ic { margin-right: 4px; position: relative; }
.fold::after { content: ""; position: absolute; left: 18px; top: 8px; width: 8px; border-top: 1px dotted #777; }
.chev { position: absolute; left: 10px; top: 4px; width: 6px; height: 6px; border: solid #444; border-width: 0 1.500px 1.500px 0; transform: rotate(45deg); }
.chev.shut { transform: rotate(-45deg); border-color: #aaa; left: 9px; top: 5px; }
.m { font: 12px/16px "Liberation Mono", monospace; letter-spacing: -1.200px; font-style: normal; }
.tree .m { display: inline; }
.vs { width: 16px; background: #f0f0f0; display: flex; flex-direction: column; align-items: center; }
.arr { width: 10px; height: 6px; flex: none; }
.arr.up { margin: 13px 0 0; }
.vthumb { width: 16px; height: 237px; background: #cdcdcd; margin-top: 78px; flex: none; }
.arr.down { margin-top: auto; margin-bottom: 7px; }
.hs { display: flex; align-items: center; background: #f0f0f0; }
.navhs { height: 16px; padding-left: 6px; padding-right: 20px; }
.arrh { width: 6px; height: 10px; flex: none; }
.hthumb { height: 16px; background: #cdcdcd; margin-left: 5px; width: 102px; flex: none; }
.arrh.right { margin-left: auto; }

.work { width: 1202px; flex: none; display: flex; flex-direction: column; }
.row { display: flex; padding-left: 8px; flex: none; }
.r27 { height: 27px; }
.r27 .bar { height: 26px; margin-top: 1px; }
.r30 { height: 30px; }
.r30 .bar { height: 28px; margin-top: 2px; }
.w789 { width: 789px; }
.w634 { width: 634px; }
.w427 { width: 427px; padding-left: 4px; }
.w1160 { width: 1160px; }
.tailbox { flex: 1; margin: 2px 0 0 1px; height: 28px; background: #fff; padding-left: 3px; display: flex; align-items: center; }
.combos { display: flex; gap: 4px; margin-left: -2px; flex: none; }
.combo { height: 23px; width: 68px; background: linear-gradient(to left, #f1f1f1 12px, #fff 12px); display: flex; align-items: center; justify-content: space-between; padding: 0 3px 0 2px; flex: none; }
.combo.first { width: 56px; }
.combo.blank { width: 56px; }
.combo.offset { width: 57px; }
.on { background: #dcebfb; box-shadow: inset 0 0 0 1px #3a8ad0; height: 24px; padding: 0 4px 0 3px; }

.cad { width: 1196px; height: 163px; margin-left: 6px; display: block; flex: none; }
.crisp { shape-rendering: crispEdges; }
.axis text { fill: #d8d8d8; font: 13px "Liberation Sans", sans-serif; text-anchor: middle; }
.rot { fill: #a8a8a8; font: 6.500px "Liberation Mono", monospace; }

.snaprow { height: 34px; padding-left: 8px; padding-top: 2px; flex: none; }
.snap { width: 886px; height: 26px; gap: 0; }
.tog { background: #dfecfb; box-shadow: inset 0 0 0 1px #2a86d0; height: 24px; padding-left: 1px; }
.w75 { width: 75px; }
.w51 { width: 51px; }
.lab { color: #888; flex: none; }
.xl { width: 21px; padding-left: 2px; }
.ul { width: 27px; padding-left: 2px; color: #555; }
.yl { width: 19px; }
.ul2 { width: 25px; padding-left: 1px; color: #555; }
.spin { height: 23px; border: 1px solid #888; background: #f4f4f4; display: flex; align-items: center; justify-content: flex-end; color: #777; flex: none; }
.spin span { padding-right: 5px; }
.sp { width: 12px; display: flex; flex-direction: column; gap: 5px; align-items: center; flex: none; }
.spu { width: 0; border: 3px solid transparent; border-bottom: 3px solid #555; border-top: 0; }
.spd { width: 0; border: 3px solid transparent; border-top: 3px solid #555; border-bottom: 0; }
.w57 { width: 57px; }
.w58 { width: 58px; }
.w68 { width: 68px; }
.chk { width: 11px; height: 11px; background: #fff; border: 1px solid #999; margin-left: 6px; flex: none; }
.rotlab { margin: 0 5px 0 8px; flex: none; }
.deg { margin-left: 3px; flex: none; }

.lower { flex: 1; display: flex; min-height: 0; }
.split { width: 18px; flex: none; padding-left: 7px; display: flex; flex-direction: column; }
.xbox { width: 11px; height: 13px; flex: none; }
.dots { width: 9px; flex: 1; margin: 1px 0 0 1px; background: radial-gradient(circle at 2px 2px, #bcbcbc 1.200px, transparent 1.500px) 0 0 / 4.500px 6px; }
.panel { flex: 1; display: flex; flex-direction: column; min-width: 0; }
.propbar { height: 26px; display: flex; align-items: center; gap: 10px; padding-left: 5px; background: linear-gradient(#fff, #f2f2f2); flex: none; }
.t { white-space: nowrap; flex: none; }
.gridwrap { flex: 1; display: flex; flex-direction: column; border: 1px solid #a0a0a0; border-right-color: #c0c0c0; background: #fff; min-height: 0; }
.sheet { flex: 1; background: #fff; padding-left: 1px; overflow: hidden; }
.table {
  display: grid; width: 1182px;
  grid-template-columns: 30px 42px 81px 81px 81px 81px 81px 100px 71px 72px 41px 81px 81px 81px 81px 82px 15px;
  grid-template-rows: 19px 20px 20px;
}
.h { background: linear-gradient(#fdfdfd, #ebebeb); border-right: 1px solid #c6c6c6; border-bottom: 1px solid #c6c6c6; display: flex; align-items: center; justify-content: center; white-space: nowrap; overflow: hidden; }
.h.r2 { grid-row: span 2; }
.h.c2 { grid-column: span 2; }
.h.c3 { grid-column: span 3; }
.h.act { background: linear-gradient(#f8dfa6, #f2c060); color: #5a0a78; }
.h.cut { justify-content: flex-start; padding-left: 4px; }
.d { background: #a8c9ef; border-right: 1px solid #c0c0c0; border-bottom: 1px solid #c0c0c0; display: flex; align-items: center; padding-left: 2px; white-space: nowrap; overflow: hidden; position: relative; }
.rh { background: linear-gradient(#ffd99e, #fbc67c); color: #5a0a78; justify-content: center; padding: 0; }
.rb { width: 10px; margin: 0 2px; text-align: center; font-size: 12px; flex: none; }
.cursor { background: #8dbcec; outline: 3px solid #000; outline-offset: -2px; overflow: visible; z-index: 1; }
.handle { position: absolute; right: -4px; bottom: -3px; width: 5px; height: 5px; background: #000; outline: 1px solid #fff; }
.gridhs { height: 17px; flex: none; padding-left: 6px; padding-right: 5px; }
.hthumb.big { width: 474px; height: 17px; margin-left: 534px; }

/* status */
.status { height: 20px; margin-top: 1px; display: flex; gap: 2px; flex: none; }
.cell { background: #f6f6f6; border: 1px solid #dcdcdc; height: 20px; padding-left: 1px; display: flex; align-items: center; white-space: pre; flex: none; overflow: hidden; }
.aw { font-family: "Noto Sans CJK SC", sans-serif; }
.w148 { width: 148px; }
.w77 { width: 77px; }
.w98 { width: 98px; }
.w49 { width: 49px; }
.w914 { width: 914px; }
.w70 { width: 70px; }

/* taskbar */
.taskbar { height: 40px; margin-top: 1px; background: #07141c; color: #fff; display: flex; align-items: center; flex: none; }
.start { width: 48px; height: 40px; background: #000; display: flex; align-items: center; justify-content: center; flex: none; }
.tki { width: 16px; height: 16px; }
.search { width: 344px; height: 40px; background: #3a3a3a; display: flex; align-items: center; padding-left: 10px; color: #9c9c9c; font-size: 14px; flex: none; }
.cort { width: 20px; height: 20px; border: 2px solid #e8e8e8; border-radius: 50%; margin-right: 6px; flex: none; }
.mic { width: 16px; height: 16px; margin-left: auto; margin-right: 12px; }
.tk { width: 50px; height: 40px; display: flex; align-items: center; justify-content: center; flex: none; position: relative; }
.tk.u { border-bottom: 2px solid #7ab4e6; }
.tk.active { background: #2e3c46; }
.tk.last { margin-left: -4px; }
.tkb { width: 24px; height: 24px; }
.qm { position: absolute; left: 24px; top: 4px; color: #f4d820; font: bold 20px/22px "Liberation Sans", sans-serif; }
.cpu { margin-left: 50px; width: 54px; text-align: center; display: flex; flex-direction: column; font-size: 12.500px; line-height: 20px; flex: none; white-space: nowrap; align-items: center; }
.tray { height: 16px; flex: none; }
.w16a { width: 16px; margin-left: 13px; }
.w16b { width: 16px; margin-left: 8px; }
.w16c { width: 16px; margin-left: 10px; }
.w16d { width: 16px; margin-left: 5px; }
.kb { width: 22px; margin-left: 9px; }
.zh { margin-left: 11px; font: bold 13px "Noto Sans CJK SC", sans-serif; flex: none; }
.slogo { margin-left: 15px; width: 16px; height: 18px; background: #f04a20; border-radius: 3px; color: #fff; text-align: center; font: bold 15px/18px "Liberation Sans", sans-serif; flex: none; transform: rotate(-6deg); }
.clock { margin-left: 10px; width: 72px; text-align: center; display: flex; flex-direction: column; font-size: 13px; line-height: 20px; flex: none; white-space: nowrap; align-items: center; }
.notif { margin-left: 13px; width: 24px; height: 32px; position: relative; flex: none; }
.notifi { width: 20px; height: 22px; margin-top: 5px; display: block; }
.nbadge { position: absolute; left: 8px; top: 14px; width: 16px; height: 16px; border-radius: 50%; background: #333; border: 1px solid #888; color: #fff; font: bold 11px/14px "Liberation Sans", sans-serif; text-align: center; }

/* floating */
.ime { position: absolute; left: 990px; top: 3px; display: flex; align-items: flex-start; }
.imes { width: 27px; height: 30px; background: #f0441c; border-radius: 4px; color: #fff; font: bold 26px/30px "Liberation Sans", sans-serif; text-align: center; transform: rotate(-6deg); z-index: 1; }
.imebar { height: 28px; width: 157px; margin-top: 2px; background: #f6f9fc; border: 1px solid #c4d4e4; display: flex; align-items: center; gap: 6px; padding-left: 6px; }
.imeying { color: #1c78d8; font-size: 15px; font-family: "Noto Sans CJK SC", sans-serif; flex: none; }
.imedot { color: #1c78d8; font-weight: bold; width: 8px; flex: none; margin-left: 7px; }
.imei { width: 16px; height: 16px; flex: none; }
.greentab { position: absolute; left: 1133px; top: 0; width: 42px; height: 3px; background: #3ab54a; }
.marks { position: absolute; left: 0; top: 0; width: 1366px; height: 768px; pointer-events: none; }
```
